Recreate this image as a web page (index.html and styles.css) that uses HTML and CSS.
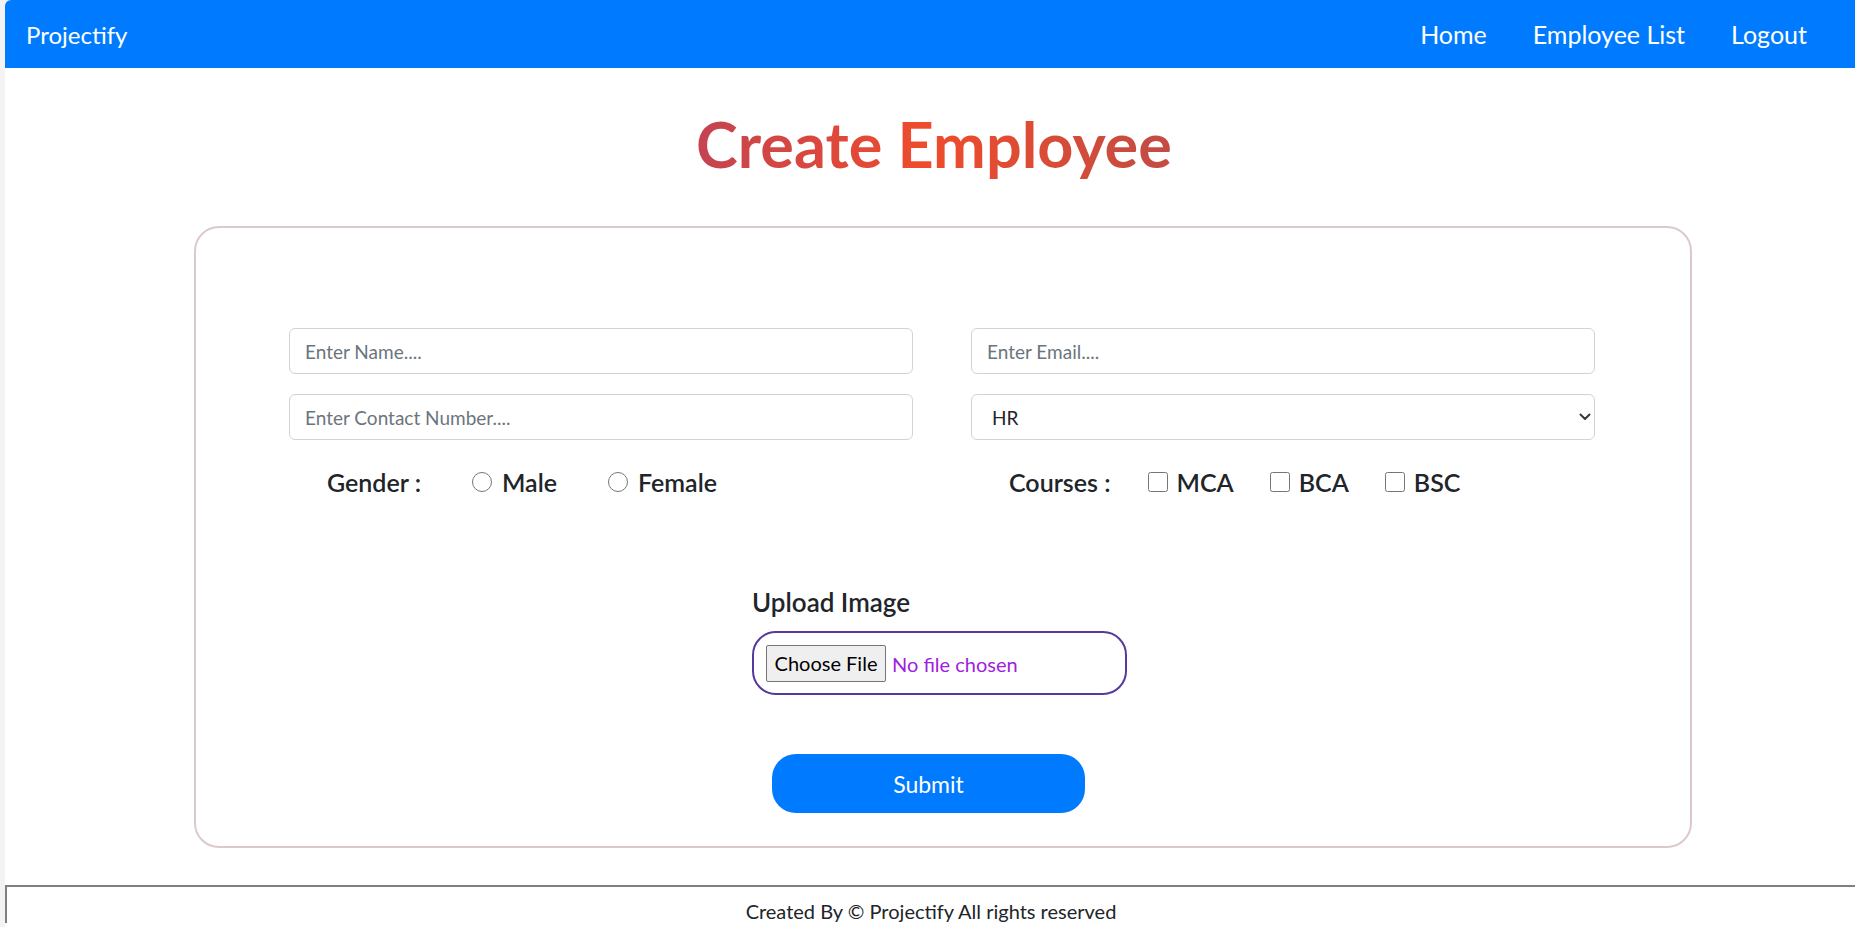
FILE: index.html
```html
<!DOCTYPE html>
<html lang="en">
<head>
<meta charset="utf-8">
<title>Create Employee - Projectify</title>
<link rel="stylesheet" href="styles.css">
</head>
<body>
<div class="page">
  <nav class="navbar">
    <a class="brand" href="#">Projectify</a>
    <ul class="nav-links">
      <li><a href="#">Home</a></li>
      <li><a href="#">Employee List</a></li>
      <li><a href="#">Logout</a></li>
    </ul>
  </nav>

  <h1 class="title">Create Employee</h1>

  <form class="card">
    <div class="grid">
      <input class="field" type="text" placeholder="Enter Name....">
      <input class="field" type="email" placeholder="Enter Email....">
      <input class="field" type="text" placeholder="Enter Contact Number....">
      <div class="select-wrap">
        <select class="field select">
          <option>HR</option>
          <option>Manager</option>
          <option>Sales</option>
        </select>
        <svg class="chevron" width="12" height="8" viewBox="0 0 12 8" aria-hidden="true"><path d="M1.5 1.5 L6 6 L10.5 1.5" fill="none" stroke="#343a40" stroke-width="2" stroke-linecap="round" stroke-linejoin="round"/></svg>
      </div>
      <div class="choice-row">
        <span class="choice-label gender-label">Gender :</span>
        <label class="choice gender-choice"><input type="radio" name="gender"><span>Male</span></label>
        <label class="choice gender-choice"><input type="radio" name="gender"><span>Female</span></label>
      </div>
      <div class="choice-row">
        <span class="choice-label course-label">Courses :</span>
        <label class="choice course-choice"><input type="checkbox"><span>MCA</span></label>
        <label class="choice course-choice"><input type="checkbox"><span>BCA</span></label>
        <label class="choice course-choice"><input type="checkbox"><span>BSC</span></label>
      </div>
    </div>

    <div class="upload">
      <div class="upload-label">Upload Image</div>
      <div class="file-box"><input class="file" type="file"></div>
    </div>

    <button class="submit" type="button">Submit</button>
  </form>

  <footer class="footer">Created By © Projectify All rights reserved</footer>
</div>
</body>
</html>
```

FILE: styles.css
```css
html, body {
  margin: 0;
  padding: 0;
  overflow: hidden;
}

body {
  background: #f3f3f3;
  font-family: Lato, "Liberation Sans", sans-serif;
  color: #212529;
}

.page {
  margin-left: 5px;
  height: 927px;
  background: #fff;
  border-top-left-radius: 6px;
  overflow: hidden;
}

/* Navbar */
.navbar {
  height: 68px;
  background: #007bff;
  display: flex;
  align-items: center;
  justify-content: space-between;
  padding: 0 25px 0 21px;
}

.brand {
  color: #fff;
  text-decoration: none;
  font-size: 24px;
}

.nav-links {
  list-style: none;
  margin: 0;
  padding: 0;
  display: flex;
}

.nav-links a {
  display: block;
  padding: 0 23px;
  color: #fff;
  text-decoration: none;
  font-size: 25px;
}

/* Title */
.title {
  margin: 39px 0 45px;
  padding-left: 8px;
  text-align: center;
  font-size: 63px;
  line-height: 74px;
  font-weight: 700;
  background: linear-gradient(90deg, #c6444f 38%, #ef4c2b 50%, #c44c42 62%);
  -webkit-background-clip: text;
  background-clip: text;
  color: transparent;
}

/* Card */
.card {
  box-sizing: border-box;
  width: 1498px;
  margin-left: 189px;
  border: 2px solid #dccaca;
  border-radius: 25px;
  padding: 100px 94px 33px 93px;
}

.grid {
  display: grid;
  grid-template-columns: 624px 624px;
  column-gap: 58px;
  row-gap: 20px;
}

.field {
  box-sizing: border-box;
  width: 100%;
  height: 46px;
  border: 1px solid #ced4da;
  border-radius: 6px;
  padding: 0 15px;
  font-family: Lato, "Liberation Sans", sans-serif;
  font-size: 19px;
  color: #212529;
  background: #fff;
  outline: none;
}

.field::placeholder {
  color: #6c757d;
}

.select-wrap {
  position: relative;
}

.select {
  appearance: none;
  -webkit-appearance: none;
  padding-left: 20px;
}

.chevron {
  position: absolute;
  right: 4px;
  top: 19px;
  pointer-events: none;
}

.choice-row {
  display: flex;
  align-items: center;
  height: 32px;
  margin-top: 6px;
  padding-left: 38px;
  font-size: 25px;
  font-weight: 600;
  color: #212529;
}

.gender-label {
  margin-right: 51px;
}

.course-label {
  margin-right: 37px;
}

.choice {
  display: flex;
  align-items: center;
}

.gender-choice {
  margin-right: 51px;
}

.course-choice {
  margin-right: 36px;
}

.choice input {
  width: 20px;
  height: 20px;
  margin: 0 10px 0 0;
}

.course-choice input {
  margin-right: 9px;
}

/* Upload */
.upload {
  margin: 90px 0 0 463px;
  width: 375px;
}

.upload-label {
  font-size: 26px;
  line-height: 29px;
  font-weight: 600;
  color: #212529;
}

.file-box {
  box-sizing: border-box;
  margin-top: 14px;
  height: 64px;
  border: 2px solid #56399c;
  border-radius: 24px;
  padding: 0 12px;
  display: flex;
  align-items: center;
}

.file {
  font-family: Lato, "Liberation Sans", sans-serif;
  font-size: 20px;
  color: #a020e0;
}

.file::file-selector-button {
  box-sizing: border-box;
  width: 120px;
  height: 37px;
  margin-right: 6px;
  background: #efefef;
  border: 1px solid #767676;
  border-radius: 2px;
  font-family: Lato, "Liberation Sans", sans-serif;
  font-size: 20px;
  color: #000;
  padding: 0;
}

/* Submit */
.submit {
  display: block;
  margin: 59px 0 0 483px;
  width: 313px;
  height: 59px;
  border: none;
  border-radius: 24px;
  background: #007bff;
  color: #fff;
  font-family: Lato, "Liberation Sans", sans-serif;
  font-size: 23px;
}

/* Footer */
.footer {
  margin-top: 37px;
  border-top: 2px solid #808080;
  border-left: 2px solid #808080;
  padding-top: 12px;
  text-align: center;
  font-size: 20px;
  line-height: 24px;
  color: #212529;
}
```
